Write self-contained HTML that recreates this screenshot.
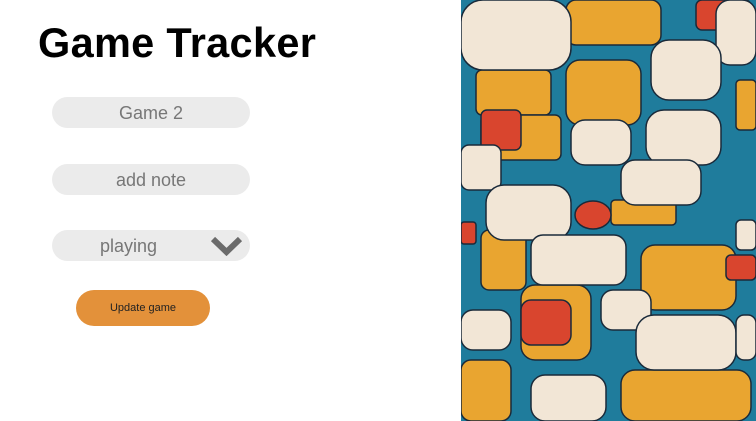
<!DOCTYPE html>
<html><head><style>
body{margin:0;width:756px;height:421px;background:#fff;position:relative;overflow:hidden;font-family:"Liberation Sans",sans-serif}
h1{position:absolute;left:38px;top:19px;margin:0;font-size:41.5px;font-weight:bold;color:#000;letter-spacing:0.3px}
.f{position:absolute;left:52px;width:198px;height:31px;border-radius:16px;background:#ebebeb;color:#777;font-size:18px;line-height:33px;text-align:center}
.btn{position:absolute;left:76px;top:290px;width:134px;height:36px;border-radius:18px;background:#e3913a;color:#222;font-size:11px;line-height:37px;text-align:center}
svg.img{position:absolute;left:461px;top:0}
</style></head><body>
<h1>Game Tracker</h1>
<div class="f" style="top:97px">Game 2</div>
<div class="f" style="top:164px">add note</div>
<div class="f" style="top:230px;text-align:left;padding-left:48px;width:150px">playing</div>
<svg style="position:absolute;left:210px;top:236px" width="33" height="20" viewBox="0 0 33 20"><path d="M3 3 L16.5 16 L30 3" stroke="#6b6b6b" stroke-width="6" fill="none"/></svg>
<div class="btn">Update game</div>
<svg class="img" width="295" height="421" viewBox="0 0 295 421">
<rect width="295" height="421" fill="#1f7c9c"/>
<g fill="#e9a530" stroke="#1a2a3a" stroke-width="1.5">
<rect x="105" y="0" width="95" height="45" rx="10"/>
<rect x="105" y="60" width="75" height="65" rx="14"/>
<rect x="15" y="70" width="75" height="45" rx="6"/>
<rect x="20" y="115" width="80" height="45" rx="6"/>
<rect x="20" y="230" width="45" height="60" rx="8"/>
<rect x="180" y="245" width="95" height="65" rx="14"/>
<rect x="60" y="285" width="70" height="75" rx="14"/>
<rect x="160" y="370" width="130" height="51" rx="14"/>
<rect x="0" y="360" width="50" height="61" rx="10"/>
<rect x="275" y="80" width="20" height="50" rx="4"/>
<rect x="150" y="200" width="65" height="25" rx="4"/>
</g>
<g fill="#d9452e" stroke="#1a2a3a" stroke-width="1.5">
<rect x="235" y="0" width="55" height="30" rx="6"/>
<rect x="20" y="110" width="40" height="40" rx="6"/>
<ellipse cx="132" cy="215" rx="18" ry="14"/>
<rect x="60" y="300" width="50" height="45" rx="10"/>
<rect x="265" y="255" width="30" height="25" rx="5"/>
<rect x="0" y="222" width="15" height="22" rx="3"/>
</g>
<g fill="#f2e6d6" stroke="#1a2a3a" stroke-width="1.5">
<rect x="0" y="0" width="110" height="70" rx="22"/>
<rect x="255" y="0" width="40" height="65" rx="14"/>
<rect x="190" y="40" width="70" height="60" rx="18"/>
<rect x="110" y="120" width="60" height="45" rx="14"/>
<rect x="185" y="110" width="75" height="55" rx="18"/>
<rect x="0" y="145" width="40" height="45" rx="8"/>
<rect x="25" y="185" width="85" height="55" rx="18"/>
<rect x="70" y="235" width="95" height="50" rx="12"/>
<rect x="160" y="160" width="80" height="45" rx="14"/>
<rect x="0" y="310" width="50" height="40" rx="12"/>
<rect x="140" y="290" width="50" height="40" rx="12"/>
<rect x="175" y="315" width="100" height="55" rx="18"/>
<rect x="70" y="375" width="75" height="46" rx="14"/>
<rect x="275" y="220" width="20" height="30" rx="5"/>
<rect x="275" y="315" width="20" height="45" rx="8"/>
</g>
</svg>
</body></html>
